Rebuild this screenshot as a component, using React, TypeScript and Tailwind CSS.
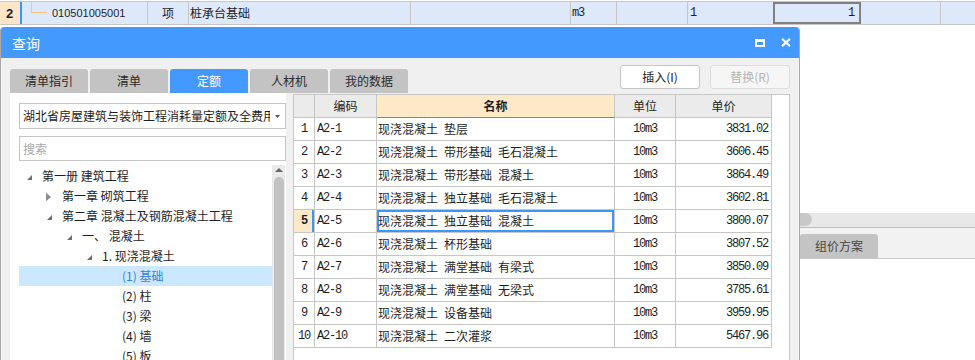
const rows = [
  ["A2-1", "现浇混凝土 垫层", "3831.02"],
  ["A2-2", "现浇混凝土 带形基础 毛石混凝土", "3606.45"],
  ["A2-3", "现浇混凝土 带形基础 混凝土", "3864.49"],
  ["A2-4", "现浇混凝土 独立基础 毛石混凝土", "3602.81"],
  ["A2-5", "现浇混凝土 独立基础 混凝土", "3800.07"],
  ["A2-6", "现浇混凝土 杯形基础", "3807.52"],
  ["A2-7", "现浇混凝土 满堂基础 有梁式", "3850.09"],
  ["A2-8", "现浇混凝土 满堂基础 无梁式", "3785.61"],
  ["A2-9", "现浇混凝土 设备基础", "3959.95"],
  ["A2-10", "现浇混凝土 二次灌浆", "5467.96"],
];

const tree: { t: string; l: number; icon?: "open" | "closed"; sel?: boolean }[] = [
  { t: "第一册 建筑工程", l: 0, icon: "open" },
  { t: "第一章 砌筑工程", l: 1, icon: "closed" },
  { t: "第二章 混凝土及钢筋混凝土工程", l: 1, icon: "open" },
  { t: "一、 混凝土", l: 2, icon: "open" },
  { t: "1. 现浇混凝土", l: 3, icon: "open" },
  { t: "(1) 基础", l: 4, sel: true },
  { t: "(2) 柱", l: 4 },
  { t: "(3) 梁", l: 4 },
  { t: "(4) 墙", l: 4 },
  { t: "(5) 板", l: 4 },
];

const indent = ["pl-[7px]", "pl-[27px]", "pl-[47px]", "pl-[67px]", "pl-[87px]"];
const tabs = ["清单指引", "清单", "定额", "人材机", "我的数据"];

const mono = "[font-family:'Liberation_Mono','Noto_Sans_CJK_SC',monospace] tracking-[-1.2px]";
const cell = "border-r border-b border-[#c6c6c6] flex items-center h-[23px] text-[12px] leading-none";

function TreeIcon({ kind }: { kind?: "open" | "closed" }) {
  return (
    <div className="w-[16px] h-full flex items-center">
      {kind === "open" && (
        <svg width="5" height="5" viewBox="0 0 5 5" className="ml-px mt-[3px]">
          <path d="M5 0L5 5L0 5Z" fill="#6e6e6e" />
        </svg>
      )}
      {kind === "closed" && (
        <svg width="5" height="8" viewBox="0 0 5 8" className="mt-px">
          <path d="M0.5 0.5L4.5 4L0.5 7.5Z" fill="#8a8a8a" stroke="#707070" strokeWidth="0.6" />
        </svg>
      )}
    </div>
  );
}

export default function App() {
  return (
    <div className="w-[975px] h-[360px] overflow-hidden bg-white text-[#1e1e1e] [font-family:'Noto_Sans_CJK_SC','Noto_Sans',sans-serif]">
      {/* grid row behind the dialog */}
      <div className="mt-px flex h-[24px] border-y border-[#c6c6c6] bg-[#dde9fb] text-[12px] leading-none">
        <div className="w-[20px] bg-[#fde5c8] flex items-center pl-[6px] font-bold text-[13px] [font-family:'Liberation_Sans',sans-serif]">2</div>
        <div className="w-[2px] bg-[#3399ff]" />
        <div className="w-[126px] border-r border-[#c6c6c6] flex">
          <div className="ml-[9px] w-[16px] h-[11px] border-l border-b border-[#f8c57a]" />
          <div className="ml-[5px] self-center text-[11px] [font-family:'Liberation_Sans',sans-serif]">010501005001</div>
        </div>
        <div className="w-[41px] border-r border-[#c6c6c6] flex items-center justify-center">项</div>
        <div className="w-[222px] border-r border-[#c6c6c6] flex items-center pl-px">桩承台基础</div>
        <div className="w-[160px] border-r border-[#c6c6c6]" />
        <div className={`w-[46px] border-r border-[#c6c6c6] flex items-center pl-[1px] ${mono}`}>m3</div>
        <div className="w-[71px] border-r border-[#c6c6c6]" />
        <div className={`w-[85px] flex items-center pl-[2px] ${mono}`}>1</div>
        <div className={`w-[88px] border-2 border-[#808080] flex items-center justify-end pr-[5px] ${mono}`}>1</div>
        <div className="w-[80px] border-r border-[#c6c6c6]" />
        <div className="flex-1" />
      </div>

      <div className="mt-[2px] flex">
        {/* dialog */}
        <div className="w-[800px] h-[340px] shrink-0 flex flex-col border-x border-[#a9a9a9] rounded-t-[4px] overflow-hidden bg-[#f0f0f0]">
          <div className="h-[31px] shrink-0 bg-[#4499ff] flex items-center justify-between pl-[11px] pr-[8px]">
            <span className="text-white text-[14px] leading-none">查询</span>
            <div className="flex items-center gap-[16px]">
              <svg width="10" height="8" viewBox="0 0 10 8">
                <path d="M0 0h10v8H0z M2 3h6v3H2z" fill="#fff" fillRule="evenodd" />
              </svg>
              <svg width="10" height="9" viewBox="0 0 10 9">
                <path d="M1 0.8L9 8.2M9 0.8L1 8.2" stroke="#fff" strokeWidth="2.2" />
              </svg>
            </div>
          </div>

          <div className="h-[35px] shrink-0 flex justify-between pl-[9px] pr-[9px]">
            <div className="mt-[11px] flex gap-[2px]">
              {tabs.map((t) => (
                <div
                  key={t}
                  className={`w-[78px] h-[24px] rounded-t-[3px] flex items-center justify-center text-[12px] leading-none ${
                    t === "定额" ? "bg-[#4499ff] text-white" : "bg-[#c3c3c3] text-[#2a2a2a]"
                  }`}
                >
                  {t}
                </div>
              ))}
            </div>
            <div className="mt-[7px] flex gap-[10px]">
              <div className="w-[80px] h-[24px] rounded-[3px] border border-[#c6c6c6] bg-white flex items-center justify-center text-[12px] leading-none text-[#222]">
                插入(I)
              </div>
              <div className="w-[80px] h-[24px] rounded-[3px] border border-[#dcdcdc] bg-[#f6f6f6] flex items-center justify-center text-[12px] leading-none text-[#b4b4b4]">
                替换(R)
              </div>
            </div>
          </div>

          <div className="flex-1 flex pl-[9px]">
            {/* left panel */}
            <div className="w-[276px] bg-white flex flex-col pl-[9px] pt-[10px]">
              <div className="h-[26px] border border-[#c4c4c4] flex items-center">
                <div className="flex-1 overflow-hidden whitespace-nowrap pl-[3px] text-[12px] leading-none">
                  湖北省房屋建筑与装饰工程消耗量定额及全费用基价表
                </div>
                <div className="w-[15px] flex justify-center">
                  <svg width="5" height="3" viewBox="0 0 5 3">
                    <path d="M0 0h5L2.5 3z" fill="#555" />
                  </svg>
                </div>
              </div>
              <div className="mt-[7px] h-[25px] border border-[#c4c4c4] flex items-center pl-[3px] text-[12px] leading-none text-[#a8a8a8]">
                搜索
              </div>
              <div className="mt-[4px] flex flex-1 mr-px">
                <div className="flex-1 pt-px">
                  {tree.map((n) => (
                    <div
                      key={n.t}
                      className={`h-[20px] flex items-center ${indent[n.l]} ${n.sel ? "bg-[#cce8ff] text-[#3a7fd8]" : ""}`}
                    >
                      <TreeIcon kind={n.icon} />
                      <span className="text-[12px] leading-none whitespace-nowrap">{n.t}</span>
                    </div>
                  ))}
                </div>
                <div className="w-[13px] bg-[#e9e9e9] flex flex-col items-center pt-[3px]">
                  <svg width="8" height="4" viewBox="0 0 8 4">
                    <path d="M0 4L4 0L8 4Z" fill="#666" />
                  </svg>
                  <div className="mt-[5px] w-[10px] flex-1 rounded-t-full bg-[#c2c2c2]" />
                </div>
              </div>
            </div>

            {/* quota table */}
            <div className="ml-[7px] mt-px w-[497px] border border-[#c8c8c8] bg-white">
              <div className="flex">
                <div className={`${cell} w-[21px] bg-[#ebebeb]`} />
                <div className={`${cell} w-[62px] bg-[#ebebeb] justify-center`}>编码</div>
                <div className={`${cell} w-[238px] bg-[#fde8c8] border-b-[#3399ff] justify-center font-bold`}>名称</div>
                <div className={`${cell} w-[61px] bg-[#ebebeb] justify-center`}>单位</div>
                <div className={`${cell} w-[96px] bg-[#ebebeb] justify-center`}>单价</div>
              </div>
              {rows.map(([code, name, price], i) => {
                const sel = i === 4;
                return (
                  <div key={code} className="flex">
                    <div
                      className={`${cell} w-[21px] justify-center ${mono} ${
                        sel ? "bg-[#fde8c8] font-bold shadow-[inset_-2px_0_0_#3399ff]" : ""
                      }`}
                    >
                      {i + 1}
                    </div>
                    <div className={`${cell} w-[62px] pl-[2px] ${mono}`}>{code}</div>
                    <div className={`${cell} w-[238px] pl-[1px] ${sel ? "shadow-[inset_0_0_0_2px_#3d96f2]" : ""}`}>
                      {name.replace(/ /g, "\u2002")}
                    </div>
                    <div className={`${cell} w-[61px] justify-center ${mono}`}>10m3</div>
                    <div className={`${cell} w-[96px] justify-end pr-[3px] ${mono}`}>{price}</div>
                  </div>
                );
              })}
            </div>
          </div>
        </div>

        {/* area beside the dialog */}
        <div className="flex-1 flex flex-col">
          <div className="h-[186px]" />
          <div className="h-[15px] bg-[#e8e8e8] border-b border-[#bcbcbc]">
            <div className="w-[12px] h-[13px] bg-[#c8c8c8] rounded-r-full" />
          </div>
          <div className="h-[31px] bg-[#f2f2f2] border-b border-[#c8c8c8] flex items-end">
            <div className="w-[78px] h-[24px] rounded-t-[3px] bg-[#c4c4c4] flex items-center justify-center text-[12px] leading-none text-[#444]">
              组价方案
            </div>
          </div>
        </div>
      </div>
    </div>
  );
}
